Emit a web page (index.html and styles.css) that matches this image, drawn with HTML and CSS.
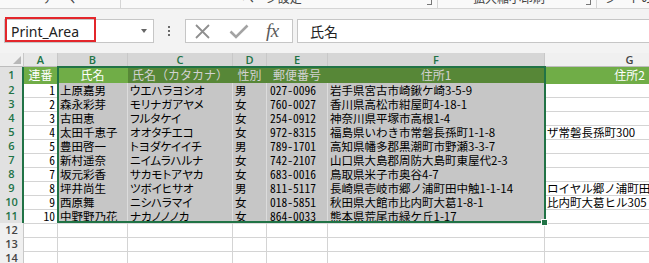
FILE: index.html
```html
<!DOCTYPE html>
<html lang="ja">
<head>
    <meta charset="UTF-8">
    <title>Print_Area</title>
    <link rel="stylesheet" href="styles.css">
</head>
<body>
    <div class="ribbon">
        <div class="group g1"><span class="label">テーマ</span></div>
        <div class="group g2"><span class="label">ページ設定</span><span class="launcher"></span></div>
        <div class="group g3"><span class="label">拡大縮小印刷</span><span class="launcher"></span></div>
        <div class="group g4"><span class="label">シートのオプション</span></div>
    </div>

    <div class="fbar">
        <div class="namebox">
            <span class="name">Print_Area</span>
            <span class="caret"></span>
            <div class="highlight"></div>
        </div>
        <div class="more"><i></i><i></i><i></i></div>
        <div class="fbtns">
            <svg class="icon-x" width="17" height="15" viewBox="0 0 17 15">
                <path d="M2 1 L15 14 M15 1 L2 14" stroke="#8f8f8f" stroke-width="1.8" fill="none"/>
            </svg>
            <svg class="icon-ok" width="20" height="15" viewBox="0 0 20 15">
                <path d="M1.5 7.5 L7 13 L18.5 1.5" stroke="#a3a3a3" stroke-width="2.6" fill="none"/>
            </svg>
            <span class="fx">fx</span>
        </div>
        <div class="finput">氏名</div>
    </div>

    <div class="sheet">
        <div class="row colhead">
            <div class="corner"></div>
            <div class="ch dim">A</div>
            <div class="ch on">B</div>
            <div class="ch on">C</div>
            <div class="ch on">D</div>
            <div class="ch on">E</div>
            <div class="ch on">F</div>
            <div class="ch">G</div>
        </div>
        <div class="row r1">
            <div class="rh on">1</div>
            <div class="c h ctr">連番</div>
            <div class="c h ctr">氏名</div>
            <div class="c hs ctr">氏名（カタカナ）</div>
            <div class="c hs ctr">性別</div>
            <div class="c hs ctr">郵便番号</div>
            <div class="c hs ctr">住所1</div>
            <div class="c h ctr">住所2</div>
        </div>
        <div class="row">
            <div class="rh on">2</div>
            <div class="c num">1</div>
            <div class="c s">上原嘉男</div>
            <div class="c s kana">ウエハラヨシオ</div>
            <div class="c s">男</div>
            <div class="c s zip">027-0096</div>
            <div class="c s">岩手県宮古市崎鍬ケ崎3-5-9</div>
            <div class="c"></div>
        </div>
        <div class="row">
            <div class="rh on">3</div>
            <div class="c num">2</div>
            <div class="c s">森永彩芽</div>
            <div class="c s kana">モリナガアヤメ</div>
            <div class="c s">女</div>
            <div class="c s zip">760-0027</div>
            <div class="c s">香川県高松市紺屋町4-18-1</div>
            <div class="c"></div>
        </div>
        <div class="row">
            <div class="rh on">4</div>
            <div class="c num">3</div>
            <div class="c s">古田恵</div>
            <div class="c s kana">フルタケイ</div>
            <div class="c s">女</div>
            <div class="c s zip">254-0912</div>
            <div class="c s">神奈川県平塚市高根1-4</div>
            <div class="c"></div>
        </div>
        <div class="row">
            <div class="rh on">5</div>
            <div class="c num">4</div>
            <div class="c s">太田千恵子</div>
            <div class="c s kana">オオタチエコ</div>
            <div class="c s">女</div>
            <div class="c s zip">972-8315</div>
            <div class="c s">福島県いわき市常磐長孫町1-1-8</div>
            <div class="c">ザ常磐長孫町300</div>
        </div>
        <div class="row">
            <div class="rh on">6</div>
            <div class="c num">5</div>
            <div class="c s">豊田啓一</div>
            <div class="c s kana">トヨダケイイチ</div>
            <div class="c s">男</div>
            <div class="c s zip">789-1701</div>
            <div class="c s">高知県幡多郡黒潮町市野瀬3-3-7</div>
            <div class="c"></div>
        </div>
        <div class="row">
            <div class="rh on">7</div>
            <div class="c num">6</div>
            <div class="c s">新村遥奈</div>
            <div class="c s kana">ニイムラハルナ</div>
            <div class="c s">女</div>
            <div class="c s zip">742-2107</div>
            <div class="c s">山口県大島郡周防大島町東屋代2-3</div>
            <div class="c"></div>
        </div>
        <div class="row">
            <div class="rh on">8</div>
            <div class="c num">7</div>
            <div class="c s">坂元彩香</div>
            <div class="c s kana">サカモトアヤカ</div>
            <div class="c s">女</div>
            <div class="c s zip">683-0016</div>
            <div class="c s">鳥取県米子市奥谷4-7</div>
            <div class="c"></div>
        </div>
        <div class="row">
            <div class="rh on">9</div>
            <div class="c num">8</div>
            <div class="c s">坪井尚生</div>
            <div class="c s kana">ツボイヒサオ</div>
            <div class="c s">男</div>
            <div class="c s zip">811-5117</div>
            <div class="c s">長崎県壱岐市郷ノ浦町田中触1-1-14</div>
            <div class="c">ロイヤル郷ノ浦町田中触</div>
        </div>
        <div class="row">
            <div class="rh on">10</div>
            <div class="c num">9</div>
            <div class="c s">西原舞</div>
            <div class="c s kana">ニシハラマイ</div>
            <div class="c s">女</div>
            <div class="c s zip">018-5851</div>
            <div class="c s">秋田県大館市比内町大葛1-8-1</div>
            <div class="c">比内町大葛ヒル305</div>
        </div>
        <div class="row">
            <div class="rh on">11</div>
            <div class="c num">10</div>
            <div class="c s">中野野乃花</div>
            <div class="c s kana">ナカノノノカ</div>
            <div class="c s">女</div>
            <div class="c s zip">864-0033</div>
            <div class="c s">熊本県荒尾市緑ケ丘1-17</div>
            <div class="c"></div>
        </div>
        <div class="row">
            <div class="rh">12</div>
            <div class="c"></div><div class="c"></div><div class="c"></div><div class="c"></div>
            <div class="c"></div><div class="c"></div><div class="c"></div>
        </div>
        <div class="row">
            <div class="rh">13</div>
            <div class="c"></div><div class="c"></div><div class="c"></div><div class="c"></div>
            <div class="c"></div><div class="c"></div><div class="c"></div>
        </div>
        <div class="row">
            <div class="rh">14</div>
            <div class="c"></div><div class="c"></div><div class="c"></div><div class="c"></div>
            <div class="c"></div><div class="c"></div><div class="c"></div>
        </div>

        <div class="selection"></div>
        <div class="handle"></div>
    </div>
</body>
</html>
```

FILE: styles.css
```css
body {
    margin: 0;
    width: 649px;
    height: 263px;
    overflow: hidden;
    background-color: #f3f3f3;
    font-family: "Noto Sans", "Noto Sans CJK JP", sans-serif;
}

/* ribbon bottom edge */
.ribbon {
    display: flex;
    width: 700px;
    height: 8px;
    overflow: hidden;
    background-color: #f9f9f9;
    border-bottom: 1px solid #d5d5d5;
}
.group {
    position: relative;
    flex: none;
    display: flex;
    align-items: flex-end;
    justify-content: center;
    border-right: 1px solid #d5d5d5;
}
.g1 { width: 120px; }
.g2 { width: 317px; padding-right: 14px; box-sizing: border-box; }
.g3 { width: 159px; padding-right: 16px; box-sizing: border-box; }
.g4 { flex: 1; justify-content: flex-start; padding-left: 8px; border-right: none; }
.label {
    font-family: "Noto Sans CJK JP", sans-serif;
    font-size: 12px;
    line-height: 16px;
    padding-bottom: 2px;
    color: #444;
    white-space: nowrap;
}
.launcher {
    position: absolute;
    right: 5px;
    bottom: 3px;
    width: 4px;
    height: 4px;
    border-right: 1px solid #777;
    border-bottom: 1px solid #777;
}

/* formula bar */
.fbar {
    display: flex;
    align-items: center;
    width: 700px;
    padding: 10px 0 0 4px;
    margin-bottom: 10px;
}
.namebox {
    position: relative;
    display: flex;
    align-items: center;
    justify-content: space-between;
    width: 150px;
    height: 24px;
    box-sizing: border-box;
    padding: 0 6px;
    background: #fff;
    border: 1px solid #c6c6c6;
}
.name {
    font-size: 14px;
    color: #222;
}
.caret {
    width: 0;
    height: 0;
    border-top: 4px solid #666;
    border-left: 3.5px solid transparent;
    border-right: 3.5px solid transparent;
}
.highlight {
    position: absolute;
    left: 0;
    top: -3px;
    width: 91px;
    height: 25px;
    box-sizing: border-box;
    border: 2px solid #e3262b;
}
.more {
    display: flex;
    flex-direction: column;
    gap: 2px;
    margin-left: 14px;
}
.more i {
    display: block;
    width: 2px;
    height: 2px;
    background: #6a6a6a;
}
.fbtns {
    display: flex;
    align-items: center;
    width: 108px;
    height: 24px;
    box-sizing: border-box;
    margin-left: 15px;
    padding-left: 8px;
    background: #fff;
    border: 1px solid #c6c6c6;
}
.icon-x { margin-top: 1px; }
.icon-ok { margin-left: 18px; margin-top: 1px; }
.fx {
    margin-left: 17px;
    font-family: "Liberation Serif", serif;
    font-style: italic;
    font-size: 19px;
    line-height: 20px;
    color: #5a5a5a;
    letter-spacing: -0.5px;
}
.finput {
    flex: 1;
    height: 24px;
    box-sizing: border-box;
    margin-left: 4px;
    padding-left: 12px;
    background: #fff;
    border: 1px solid #c6c6c6;
    font-family: "Noto Sans CJK JP", sans-serif;
    font-size: 14px;
    line-height: 22px;
    color: #222;
}

/* sheet grid */
.sheet {
    position: relative;
    width: 715px;
    background: #fff;
    font-family: "Noto Sans CJK JP", sans-serif;
}
.row {
    display: grid;
    grid-template-columns: 24px 34px 70px 105px 34px 61px 217px 170px;
    height: 14px;
}
.row.r1 { height: 16px; }

.colhead > div {
    box-sizing: border-box;
    border-right: 1px solid #c8c8c8;
    border-bottom: 1px solid #bdbdbd;
    background: #f0f0f0;
    text-align: center;
    font-family: "Open Sans", sans-serif;
    font-weight: 600;
    font-size: 11px;
    line-height: 13px;
    color: #444;
}
.colhead .corner { position: relative; }
.colhead .corner::after {
    content: "";
    position: absolute;
    right: 2px;
    bottom: 2px;
    border-left: 8px solid transparent;
    border-bottom: 8px solid #b8b8b8;
}
.colhead .ch.dim { background: #e6e6e6; color: #217346; }
.colhead .ch.on { background: #d6d6d6; color: #217346; }

.rh {
    box-sizing: border-box;
    background: #f0f0f0;
    border-right: 1px solid #c8c8c8;
    border-bottom: 1px solid #d4d4d4;
    text-align: center;
    font-family: "Open Sans", sans-serif;
    font-weight: 600;
    font-size: 11px;
    line-height: 14px;
    color: #444;
}
.rh.on {
    background: #e1e1e1;
    color: #217346;
    border-right: 2px solid #217346;
    padding-left: 1px;
}
.r1 .rh { line-height: 16px; }

.c {
    box-sizing: border-box;
    padding: 0 2px;
    border-right: 1px solid #d4d4d4;
    border-bottom: 1px solid #d4d4d4;
    font-size: 11.5px;
    line-height: 14px;
    color: #000;
    white-space: nowrap;
    overflow: hidden;
}
.r1 .c { line-height: 16px; font-size: 12px; }
.c.ctr { text-align: center; }
.c.num { text-align: right; font-feature-settings: "hwid" 1; }
.c.zip { font-feature-settings: "hwid" 1; padding-left: 3px; }
.c.kana { font-feature-settings: "palt" 1; }
.c.s {
    background: #c6c6c6;
    border-color: #dcdcdc;
}
.c.h {
    background: #70ad47;
    border-color: #70ad47;
    color: #fff;
}
.c.hs {
    background: #578737;
    border-color: #578737;
    color: #d2d2d2;
}

.selection {
    position: absolute;
    left: 57px;
    top: 13px;
    width: 489px;
    height: 157px;
    box-sizing: border-box;
    border: 2px solid #217346;
}
.handle {
    position: absolute;
    left: 541px;
    top: 166px;
    width: 5px;
    height: 5px;
    background: #217346;
    border: 1px solid #fff;
}
```
